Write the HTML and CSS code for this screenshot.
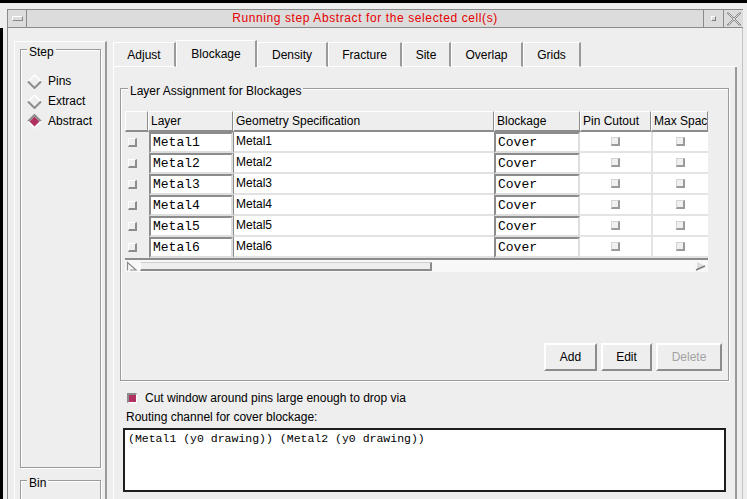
FILE: index.html
```html
<!DOCTYPE html>
<html>
<head>
<meta charset="utf-8">
<link rel="stylesheet" href="styles.css">
</head>
<body>
<div class="screen">
  <div class="topline"></div>
  <div class="title-area">
    <div class="titlebar">
      <div class="tb-btn tb-min"><span class="tb-bar"></span></div>
      <div class="tb-title">Running step Abstract for the selected cell(s)</div>
      <div class="tb-btn tb-max"><span class="tb-sq"></span></div>
      <div class="tb-btn tb-close">
        <svg width="16" height="14" viewBox="0 0 16 14"><path d="M1 1H3L8 6L13 1H15L9 7L15 13H13L8 8L3 13H1L7 7Z" fill="none" stroke="#8c8c8c" stroke-width="1"/></svg>
      </div>
    </div>
  </div>
  <div class="main">
    <div class="win">
      <aside class="side">
        <div class="group step">
          <div class="legend">Step</div>
          <div class="radios">
            <div class="radio">
              <svg class="dia" width="15" height="15" viewBox="0 0 15 15"><path d="M1 7.5L7.5 1L14 7.5" fill="none" stroke="#fff" stroke-width="1.5"/><path d="M1 7.5L7.5 14L14 7.5" fill="none" stroke="#8c8c8c" stroke-width="2"/></svg>
              <span>Pins</span>
            </div>
            <div class="radio">
              <svg class="dia" width="15" height="15" viewBox="0 0 15 15"><path d="M1 7.5L7.5 1L14 7.5" fill="none" stroke="#fff" stroke-width="1.5"/><path d="M1 7.5L7.5 14L14 7.5" fill="none" stroke="#8c8c8c" stroke-width="2"/></svg>
              <span>Extract</span>
            </div>
            <div class="radio">
              <svg class="dia" width="15" height="15" viewBox="0 0 15 15"><path d="M7.5 2.5L12.5 7.5L7.5 12.5L2.5 7.5Z" fill="#b03060"/><path d="M1 7.5L7.5 1L14 7.5" fill="none" stroke="#8c8c8c" stroke-width="2"/><path d="M1 7.5L7.5 14L14 7.5" fill="none" stroke="#fff" stroke-width="1.5"/></svg>
              <span>Abstract</span>
            </div>
          </div>
        </div>
        <div class="group bin">
          <div class="legend">Bin</div>
        </div>
      </aside>
      <section class="notebook">
        <div class="tabs">
          <div class="tab w-adjust">Adjust</div>
          <div class="tab active w-blockage">Blockage</div>
          <div class="tab w-density">Density</div>
          <div class="tab w-fracture">Fracture</div>
          <div class="tab w-site">Site</div>
          <div class="tab w-overlap">Overlap</div>
          <div class="tab w-grids">Grids</div>
          <div class="tab-fill"></div>
        </div>
        <div class="panel">
          <div class="group layers">
            <div class="legend">Layer Assignment for Blockages</div>
            <div class="grid">
              <div class="th"></div>
              <div class="th">Layer</div>
              <div class="th">Geometry Specification</div>
              <div class="th">Blockage</div>
              <div class="th">Pin Cutout</div>
              <div class="th">Max Spac</div>

              <div class="sel"><span class="cb"></span></div>
              <div class="ecell"><div class="entry">Metal1</div></div>
              <div class="geo">Metal1</div>
              <div class="ecell b"><div class="entry">Cover</div></div>
              <div class="chk"><span class="cb w"></span></div>
              <div class="chk last"><span class="cb w"></span></div>

              <div class="sel"><span class="cb"></span></div>
              <div class="ecell"><div class="entry">Metal2</div></div>
              <div class="geo">Metal2</div>
              <div class="ecell b"><div class="entry">Cover</div></div>
              <div class="chk"><span class="cb w"></span></div>
              <div class="chk last"><span class="cb w"></span></div>

              <div class="sel"><span class="cb"></span></div>
              <div class="ecell"><div class="entry">Metal3</div></div>
              <div class="geo">Metal3</div>
              <div class="ecell b"><div class="entry">Cover</div></div>
              <div class="chk"><span class="cb w"></span></div>
              <div class="chk last"><span class="cb w"></span></div>

              <div class="sel"><span class="cb"></span></div>
              <div class="ecell"><div class="entry">Metal4</div></div>
              <div class="geo">Metal4</div>
              <div class="ecell b"><div class="entry">Cover</div></div>
              <div class="chk"><span class="cb w"></span></div>
              <div class="chk last"><span class="cb w"></span></div>

              <div class="sel"><span class="cb"></span></div>
              <div class="ecell"><div class="entry">Metal5</div></div>
              <div class="geo">Metal5</div>
              <div class="ecell b"><div class="entry">Cover</div></div>
              <div class="chk"><span class="cb w"></span></div>
              <div class="chk last"><span class="cb w"></span></div>

              <div class="sel"><span class="cb"></span></div>
              <div class="ecell"><div class="entry">Metal6</div></div>
              <div class="geo">Metal6</div>
              <div class="ecell b"><div class="entry">Cover</div></div>
              <div class="chk"><span class="cb w"></span></div>
              <div class="chk last"><span class="cb w"></span></div>
            </div>
            <div class="hscroll">
              <svg class="sc-left" width="12" height="10" viewBox="0 0 12 10"><path d="M1.5 0.5V9.5M1.5 1.5L10 9H4" fill="none" stroke="#8c8c8c" stroke-width="1.2"/></svg>
              <div class="slider"></div>
              <div class="sc-space"></div>
              <svg class="sc-right" width="11" height="10" viewBox="0 0 11 10"><path d="M2 1L10 5L2 9Z" fill="#dcdcdc"/><path d="M1 9L10 5" stroke="#7c7c7c" stroke-width="1.5"/></svg>
            </div>
            <div class="buttons">
              <div class="btn w-add">Add</div>
              <div class="btn w-edit">Edit</div>
              <div class="btn w-del disabled">Delete</div>
            </div>
          </div>
          <div class="check">
            <span class="checkbox"></span>
            <span>Cut window around pins large enough to drop via</span>
          </div>
          <div class="route-label">Routing channel for cover blockage:</div>
          <div class="textbox">(Metal1 (y0 drawing)) (Metal2 (y0 drawing))</div>
        </div>
      </section>
    </div>
  </div>
</div>
</body>
</html>
```

FILE: styles.css
```css
* { box-sizing: border-box; }
html, body { margin: 0; padding: 0; }
body {
  width: 747px;
  height: 499px;
  overflow: hidden;
  background: #eeeeee;
  font-family: "Liberation Sans", Arial, sans-serif;
  font-size: 12px;
  color: #000;
}
.screen { height: 499px; display: flex; flex-direction: column; }
.topline { height: 3px; background: #000; flex: none; }

/* title bar */
.title-area { flex: none; padding: 6px 4px 0 7px; }
.titlebar {
  height: 19px;
  display: flex;
  background: #dcdcdc;
  border-top: 1px solid #8a8a8a;
  border-bottom: 1px solid #8a8a8a;
  border-left: 1px solid #8a8a8a;
}
.tb-btn { flex: none; display: flex; align-items: center; justify-content: center; }
.tb-min { width: 19px; border-right: 1px solid #8a8a8a; }
.tb-bar {
  width: 11px; height: 5px;
  border-top: 1px solid #fff; border-left: 1px solid #fff;
  border-bottom: 1px solid #8a8a8a; border-right: 1px solid #8a8a8a;
}
.tb-title {
  flex: 1;
  text-align: center;
  color: #e60000;
  line-height: 17px;
  letter-spacing: 0.6px;
  white-space: nowrap;
}
.tb-max { width: 20px; border-left: 1px solid #8a8a8a; }
.tb-sq {
  width: 5px; height: 5px;
  border-top: 1px solid #fff; border-left: 1px solid #fff;
  border-bottom: 1px solid #7a7a7a; border-right: 1px solid #7a7a7a;
}
.tb-close { width: 20px; border-left: 1px solid #8a8a8a; }

/* main window */
.main {
  flex: 1;
  min-height: 0;
  display: flex;
  border-left: 3px solid #000;
  padding: 0 4px;
}
.win {
  flex: 1;
  min-height: 0;
  display: flex;
  align-items: flex-start;
  border-left: 1px solid #8a8a8a;
  border-right: 1px solid #c4c4c4;
  padding: 12px 0 0 6px;
}

/* groups */
.group {
  border: 1px solid #9a9a9a;
  box-shadow: inset 1px 1px 0 #fff, 1px 1px 0 #fff;
}
.legend {
  width: fit-content;
  background: #eeeeee;
  line-height: 14px;
  height: 14px;
  padding: 0 2px;
  margin: -5px 0 0 7px;
  white-space: nowrap;
}

/* side */
.side {
  width: 93px;
  flex: none;
  align-self: stretch;
  margin-top: 1px;
  border-top: 1px solid #fff;
  border-left: 1px solid #fff;
  border-right: 2px solid #9a9a9a;
  padding: 7px 4px 0 5px;
}
.step { height: 419px; }
.step .legend, .bin .legend { margin-left: 6px; }
.radios { margin-top: 12px; }
.radio {
  display: flex;
  align-items: center;
  height: 20px;
  gap: 6px;
  padding-left: 6px;
}
.dia { flex: none; }
.bin { margin-top: 12px; height: 40px; }

/* notebook */
.notebook {
  width: 624px;
  flex: none;
  align-self: stretch;
  margin-left: 6px;
  display: flex;
  flex-direction: column;
}
.tabs { flex: none; height: 27px; display: flex; align-items: flex-end; }
.tab {
  flex: none;
  height: 25px;
  border-top: 1px solid #fff;
  border-left: 1px solid #fff;
  border-right: 2px solid #9a9a9a;
  border-bottom: 1px solid #fff;
  display: flex;
  align-items: center;
  justify-content: center;
  white-space: nowrap;
}
.tab.active { height: 27px; border-bottom: none; }
.tab-fill { flex: 1; height: 1px; background: #fff; }
.w-adjust { width: 63px; }
.w-blockage { width: 81px; }
.w-density { width: 71px; }
.w-fracture { width: 74px; }
.w-site { width: 49px; }
.w-overlap { width: 72px; }
.w-grids { width: 58px; }

.panel {
  flex: 1;
  min-height: 0;
  border-left: 1px solid #fff;
  border-right: 2px solid #9a9a9a;
  padding: 21px 6px 0 6px;
}
.layers { padding: 0 6px 9px 4px; }
.layers .legend { margin-left: 3px; }

/* table */
.grid {
  margin-top: 13px;
  width: 583px;
  display: grid;
  grid-template-columns: 23px 85px 261px 86px 71px 57px;
  grid-auto-rows: 21px;
}
.th {
  background: #eeeeee;
  border-top: 1px solid #fff;
  border-left: 1px solid #fff;
  border-right: 1px solid #8c8c8c;
  border-bottom: 2px solid #8c8c8c;
  padding-left: 2px;
  line-height: 18px;
  white-space: nowrap;
  overflow: hidden;
}
.sel {
  background: #eeeeee;
  display: flex;
  align-items: center;
  padding-left: 3px;
}
.cb {
  display: block;
  width: 9px;
  height: 9px;
  background: #eeeeee;
  border-top: 1px solid #fff;
  border-left: 1px solid #fff;
  border-bottom: 2px solid #8c8c8c;
  border-right: 2px solid #8c8c8c;
}
.cb.w {
  width: 9px;
  height: 9px;
  background: #f0f0f0;
  border-top: 1px solid #d4d4d4;
  border-left: 1px solid #d4d4d4;
  border-bottom: 2px solid #9a9a9a;
  border-right: 2px solid #9a9a9a;
}
.ecell { background: #eeeeee; padding-left: 1px; }
.ecell.b { padding-left: 0; }
.entry {
  height: 21px;
  background: #fff;
  border-top: 2px solid #8c8c8c;
  border-left: 2px solid #8c8c8c;
  border-bottom: 2px solid #dedede;
  border-right: 2px solid #dedede;
  padding-left: 2px;
  font-family: "Liberation Mono", "DejaVu Sans Mono", monospace;
  font-size: 13px;
  line-height: 17px;
  white-space: nowrap;
}
.geo {
  background: #fff;
  border-left: 1px solid #8c8c8c;
  border-bottom: 2px solid #e2e2e2;
  padding-left: 2px;
  line-height: 19px;
}
.chk {
  background: #fff;
  border-bottom: 2px solid #e4e4e4;
  display: flex;
  align-items: center;
  justify-content: center;
}
.chk.last { border-left: 2px solid #e4e4e4; }

.hscroll {
  width: 583px;
  height: 14px;
  border-top: 2px solid #8c8c8c;
  background: #f8f8f8;
  display: flex;
  align-items: center;
}
.sc-left { flex: none; margin-left: 1px; }
.slider {
  flex: none;
  width: 292px;
  height: 9px;
  margin-left: 2px;
  background: #eeeeee;
  border-top: 1px solid #cfcfcf;
  border-left: 1px solid #fff;
  border-bottom: 2px solid #8c8c8c;
  border-right: 2px solid #8c8c8c;
}
.sc-space { flex: 1; }
.sc-right { flex: none; margin-right: 2px; }

.buttons {
  margin-top: 71px;
  display: flex;
  justify-content: flex-end;
  gap: 4px;
}
.btn {
  height: 28px;
  border-top: 2px solid #fff;
  border-left: 2px solid #fff;
  border-bottom: 2px solid #8c8c8c;
  border-right: 2px solid #8c8c8c;
  display: flex;
  align-items: center;
  justify-content: center;
}
.btn.disabled { color: #a3a3a3; }
.w-add { width: 53px; }
.w-edit { width: 51px; }
.w-del { width: 66px; }

.check {
  margin: 10px 0 0 7px;
  height: 14px;
  display: flex;
  align-items: center;
  gap: 8px;
}
.checkbox {
  flex: none;
  width: 10px;
  height: 10px;
  background: #b03060;
  border-top: 2px solid #8c8c8c;
  border-left: 2px solid #8c8c8c;
  border-bottom: 1px solid #fff;
  border-right: 1px solid #fff;
}
.route-label { margin: 5px 0 0 6px; line-height: 14px; }
.textbox {
  margin: 4px 0 0 3px;
  width: 603px;
  height: 64px;
  background: #fff;
  border: 2px solid #1e1e1e;
  padding: 2px 3px;
  font-family: "Liberation Mono", "DejaVu Sans Mono", monospace;
  font-size: 11.5px;
  line-height: 14px;
  white-space: pre;
}
```
